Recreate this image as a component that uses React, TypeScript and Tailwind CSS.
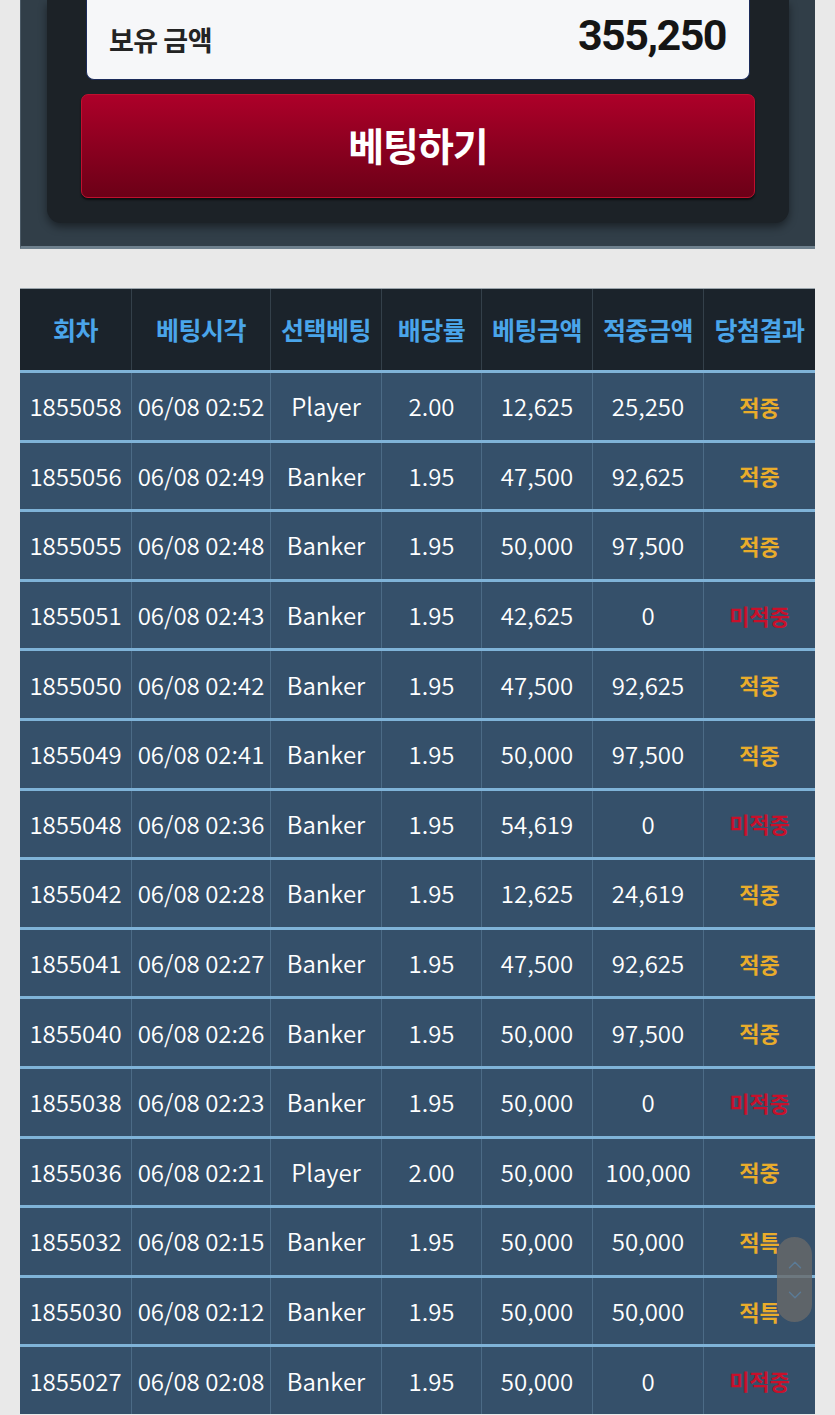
import { ChevronUp, ChevronDown } from 'lucide-react';

type Row = {
  round: string;
  time: string;
  pick: string;
  odds: string;
  bet: string;
  win: string;
  result: string;
};

const ROWS: Row[] = [
  { round: '1855058', time: '06/08 02:52', pick: 'Player', odds: '2.00', bet: '12,625', win: '25,250', result: '적중' },
  { round: '1855056', time: '06/08 02:49', pick: 'Banker', odds: '1.95', bet: '47,500', win: '92,625', result: '적중' },
  { round: '1855055', time: '06/08 02:48', pick: 'Banker', odds: '1.95', bet: '50,000', win: '97,500', result: '적중' },
  { round: '1855051', time: '06/08 02:43', pick: 'Banker', odds: '1.95', bet: '42,625', win: '0', result: '미적중' },
  { round: '1855050', time: '06/08 02:42', pick: 'Banker', odds: '1.95', bet: '47,500', win: '92,625', result: '적중' },
  { round: '1855049', time: '06/08 02:41', pick: 'Banker', odds: '1.95', bet: '50,000', win: '97,500', result: '적중' },
  { round: '1855048', time: '06/08 02:36', pick: 'Banker', odds: '1.95', bet: '54,619', win: '0', result: '미적중' },
  { round: '1855042', time: '06/08 02:28', pick: 'Banker', odds: '1.95', bet: '12,625', win: '24,619', result: '적중' },
  { round: '1855041', time: '06/08 02:27', pick: 'Banker', odds: '1.95', bet: '47,500', win: '92,625', result: '적중' },
  { round: '1855040', time: '06/08 02:26', pick: 'Banker', odds: '1.95', bet: '50,000', win: '97,500', result: '적중' },
  { round: '1855038', time: '06/08 02:23', pick: 'Banker', odds: '1.95', bet: '50,000', win: '0', result: '미적중' },
  { round: '1855036', time: '06/08 02:21', pick: 'Player', odds: '2.00', bet: '50,000', win: '100,000', result: '적중' },
  { round: '1855032', time: '06/08 02:15', pick: 'Banker', odds: '1.95', bet: '50,000', win: '50,000', result: '적특' },
  { round: '1855030', time: '06/08 02:12', pick: 'Banker', odds: '1.95', bet: '50,000', win: '50,000', result: '적특' },
  { round: '1855027', time: '06/08 02:08', pick: 'Banker', odds: '1.95', bet: '50,000', win: '0', result: '미적중' },
];

const HEADERS = ['회차', '베팅시각', '선택베팅', '배당률', '베팅금액', '적중금액', '당첨결과'];
const COLS = 'grid grid-cols-[111px_139px_111px_100px_111px_111px_1fr]';

function BetPanel() {
  return (
    <div className="mx-[20px] h-[249px] bg-[#313e48] border-l border-[#4b5a66] border-b-[3px] border-b-[#6e808d]">
      <div className="mx-[26px] h-[223px] rounded-b-[14px] bg-[#1c2227] shadow-[0_4px_8px_rgba(0,0,0,0.45)] px-[39px]">
        <div className="h-[80px] rounded-b-[8px] bg-[#f6f7f9] border border-t-0 border-[#1b2b5a] flex items-center justify-between pl-[22px] pr-[23px]">
          <span className="text-[27px] font-bold text-[#232323] tracking-[-0.5px] pt-[2px]">보유 금액</span>
          <span className="font-['Roboto'] text-[43px] font-bold text-[#151515] tracking-[-1.5px] -mt-[8px]">355,250</span>
        </div>
        <button className="mt-[14px] -mx-[5px] w-[calc(100%+10px)] h-[104px] rounded-[7px] bg-gradient-to-b from-[#ad0029] to-[#6c0017] border border-[#c0102e] shadow-[0_2px_2px_rgba(0,0,0,0.6)] flex items-center justify-center">
          <span className="text-white text-[39px] font-bold tracking-[-1px] -mt-[4px]">베팅하기</span>
        </button>
      </div>
    </div>
  );
}

function resultColor(r: string) {
  return r === '미적중' ? 'text-[#c8102b]' : 'text-[#e9ac2b]';
}

export default function App() {
  return (
    <div className="relative w-[835px] h-[1415px] overflow-hidden bg-[#e9e9e9] font-['Noto_Sans_CJK_KR','Noto_Sans',sans-serif]">
      <BetPanel />

      <div className="mt-[39px] mx-[20px] border-t border-[#9aa4ab]">
        <div className={`${COLS} h-[81px] bg-[#1b232b]`}>
          {HEADERS.map((h, i) => (
            <div
              key={h}
              className={`flex items-center justify-center text-[25px] font-bold tracking-[-0.5px] text-[#4aa5ea] ${i > 0 ? 'border-l border-[#34404a]' : ''}`}
            >
              {h}
            </div>
          ))}
        </div>
        {ROWS.map((r) => (
          <div key={r.round} className={`${COLS} h-[69.6px] bg-[#35506a] border-t-[3px] border-[#7fb3d8] text-[24px] font-[350] text-white`}>
            <div className="flex items-center justify-center">{r.round}</div>
            <div className="flex items-center justify-center border-l border-[#4c6b86]">{r.time}</div>
            <div className="flex items-center justify-center border-l border-[#4c6b86]">{r.pick}</div>
            <div className="flex items-center justify-center border-l border-[#4c6b86]">{r.odds}</div>
            <div className="flex items-center justify-center border-l border-[#4c6b86]">{r.bet}</div>
            <div className="flex items-center justify-center border-l border-[#4c6b86]">{r.win}</div>
            <div className={`flex items-center justify-center text-[22px] font-bold border-l border-[#4c6b86] ${resultColor(r.result)}`}>
              {r.result}
            </div>
          </div>
        ))}
      </div>

      <div className="absolute left-[777px] top-[1237px] w-[35px] h-[85px] rounded-full bg-[rgba(105,105,105,0.8)] flex flex-col items-center justify-center gap-[8px]">
        <ChevronUp size={22} strokeWidth={1.5} className="text-[#5b7b97]" />
        <ChevronDown size={22} strokeWidth={1.5} className="text-[#5b7b97]" />
      </div>
    </div>
  );
}
